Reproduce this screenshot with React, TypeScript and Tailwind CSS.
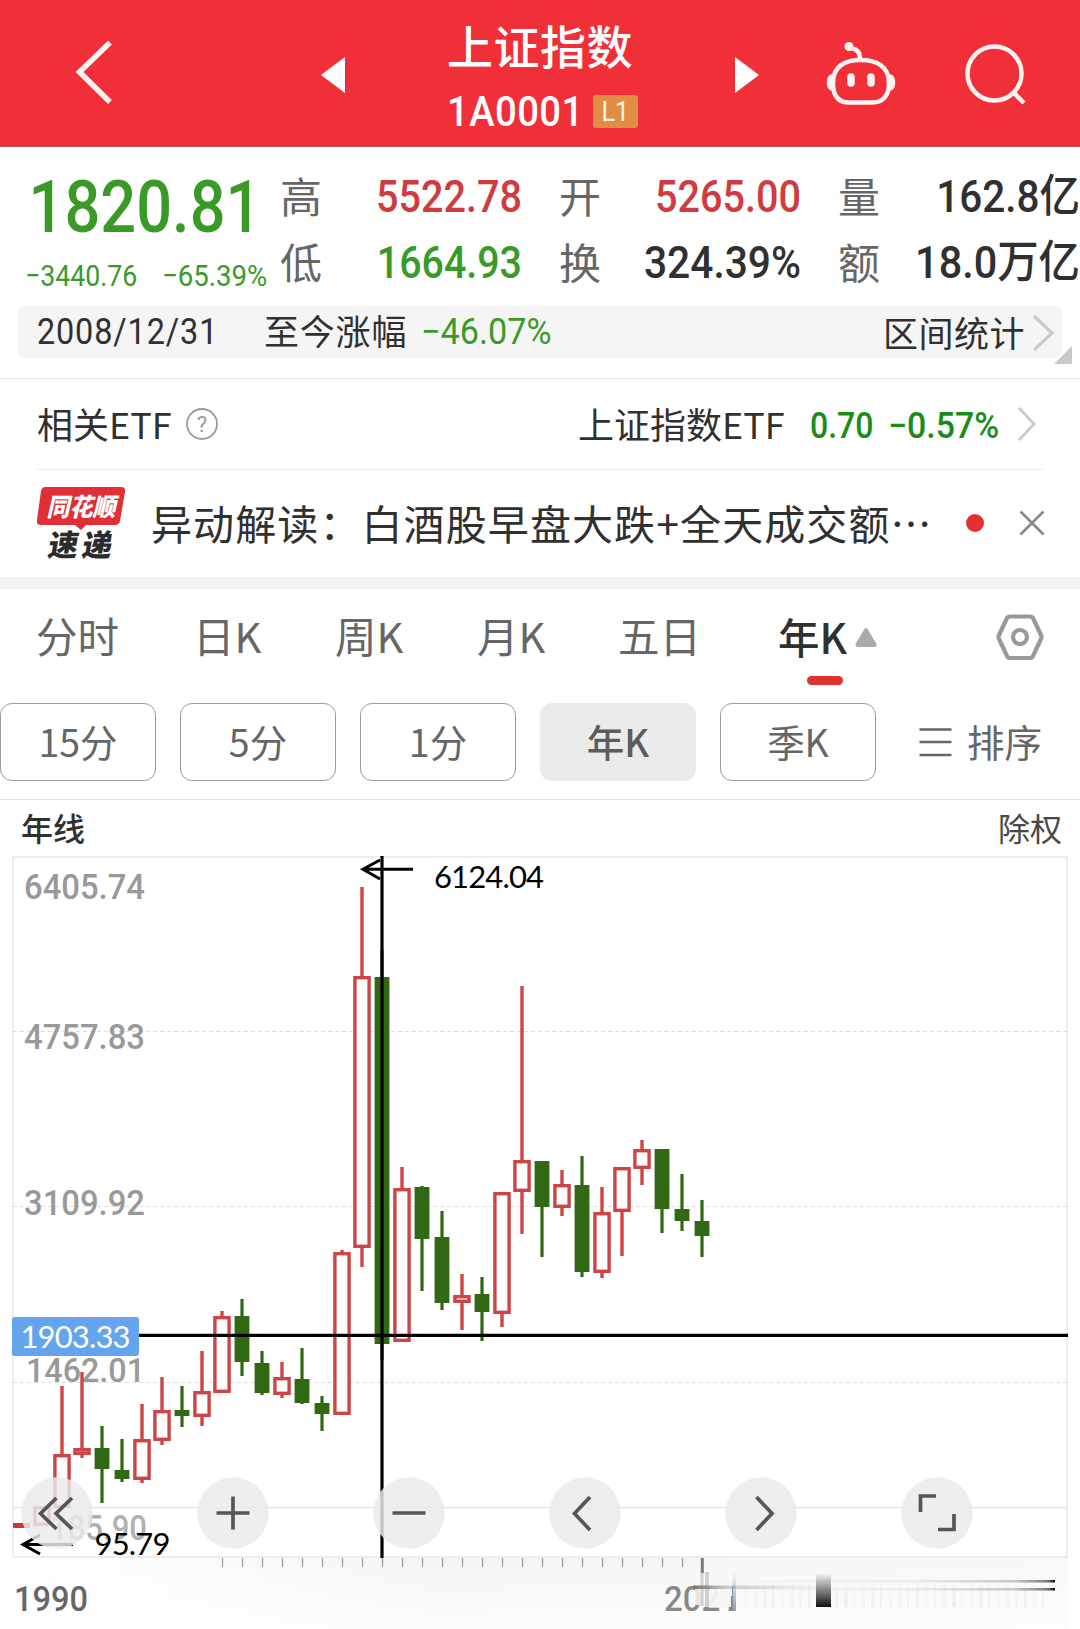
import { ReactNode } from "react";
import { clsx } from "clsx";

const NUM = "font-['Roboto','Noto_Sans_CJK_SC',sans-serif] whitespace-nowrap inline-block";

function Num({ className, children }: { className?: string; children: ReactNode }) {
    return <span className={clsx(NUM, className)}>{children}</span>;
}

function Header() {
    return (
        <header className="flex h-[147px] bg-[#f12f38] border-b border-[#c8505a] text-white">
            <div className="w-[321px] pl-[74px] pt-[38px]">
                <svg width="42" height="68" viewBox="0 0 42 68" fill="none" stroke="#fff3f1" strokeWidth="5.500">
                    <path d="M36 4.500 L5.500 34 L36 64" />
                </svg>
            </div>
            <div className="w-[126px] pt-[57px]">
                <svg width="25" height="36" viewBox="0 0 25 36" fill="#fff">
                    <path d="M24 0 L0 18 L24 36 Z" />
                </svg>
            </div>
            <div className="w-[287px] pt-[18px]">
                <div className="h-[52px] leading-[52px] text-[46px] tracking-[0.5px] font-medium">上证指数</div>
                <div className="flex h-[38px] mt-[22px]">
                    <Num className="w-[146px] leading-[40px] text-[42px] font-medium origin-left scale-x-[0.91] tracking-[0.5px]">1A0001</Num>
                    <span className="flex items-center justify-center w-[45px] h-[33px] mt-[3px] rounded-[3px] bg-[#e08d46]">
                        <Num className="text-[28px] leading-[35px] text-[#fff3dd] scale-x-[0.9]">L1</Num>
                    </span>
                </div>
            </div>
            <div className="w-[88px] pt-[57px]">
                <svg width="25" height="36" viewBox="0 0 25 36" fill="#fff">
                    <path d="M1 0 L25 18 L1 36 Z" />
                </svg>
            </div>
            <div className="w-[140px] pt-[40px] pl-[2px]">
                <svg width="74" height="68" viewBox="0 0 74 68" fill="none" stroke="#fff3f1" strokeWidth="4.500" strokeLinecap="round">
                    <path d="M36.500 20 C52 20 65 26 65 43 C65 57 58 62.500 48 62.500 H25 C15 62.500 9 57 9 43 C9 26 21 20 36.500 20 Z" />
                    <path d="M36 18 C36 12 33 9 27 8" strokeWidth="4.500" />
                    <circle cx="25" cy="6.500" r="4.500" fill="#fff3f1" stroke="none" />
                    <path d="M8 35 C2 36 2 49 8 50 Z M66 35 C72 36 72 49 66 50 Z" fill="#fff3f1" strokeWidth="1.500" />
                    <path d="M27 37 V43 M47 37 V43" strokeWidth="7.500" />
                </svg>
            </div>
            <div className="pt-[42px]">
                <svg width="66" height="66" viewBox="0 0 66 66" fill="none" stroke="#fff3f1" strokeWidth="4.500">
                    <circle cx="32.500" cy="31.500" r="27" />
                    <path d="M51 50 L62 61" />
                </svg>
            </div>
        </header>
    );
}

const labelCls = "text-[42px] leading-[64px] -ml-[1px] text-[#666]";
const valueCls = "text-[45px] leading-[68px] font-medium text-right origin-right";

function Quote() {
    return (
        <section className="border-b border-[#e4e4e4] h-[232px]">
            <div className="grid grid-cols-[281px_42px_199px_38px_42px_199px_38px_42px_199px] grid-rows-[66px_66px] pt-[16px] h-[159px]">
                <div className="row-span-2 text-[#3a9a27]">
                    <Num className="w-[250px] h-[84px] pl-[33px] text-[73px] leading-[89px] font-medium origin-left scale-x-[0.865]">1820.81</Num>
                    <div className="flex pl-[25px] h-[40px] pt-[9px]">
                        <Num className="w-[137px] text-[30px] leading-[40px] origin-left scale-x-[0.89]">−3440.76</Num>
                        <Num className="w-[115px] text-[30px] leading-[40px] origin-left scale-x-[0.92]">−65.39%</Num>
                    </div>
                </div>
                <span className={labelCls}>高</span>
                <Num className={clsx(valueCls, "text-[#cf3b40] scale-x-[0.88]")}>5522.78</Num>
                <span />
                <span className={labelCls}>开</span>
                <Num className={clsx(valueCls, "text-[#cf3b40] scale-x-[0.88]")}>5265.00</Num>
                <span />
                <span className={labelCls}>量</span>
                <Num className={clsx(valueCls, "text-[#303030] scale-x-[0.9]")}>162.8亿</Num>
                <span className={labelCls}>低</span>
                <Num className={clsx(valueCls, "text-[#3a9a27] scale-x-[0.875]")}>1664.93</Num>
                <span />
                <span className={labelCls}>换</span>
                <Num className={clsx(valueCls, "text-[#303030] scale-x-[0.905]")}>324.39%</Num>
                <span />
                <span className={labelCls}>额</span>
                <Num className={clsx(valueCls, "text-[#303030] scale-x-[0.92]")}>18.0万亿</Num>
            </div>
            <div className="relative flex w-[1044px] h-[52px] ml-[18px] rounded-[6px] bg-[#f5f5f5] text-[#303030]">
                <Num className="w-[229px] pl-[21px] text-[36px] leading-[52px] tracking-[1px] origin-left scale-x-[0.9]">2008/12/31</Num>
                <span className="w-[174px] text-[35px] leading-[48px] tracking-[0.8px] pl-[17px] whitespace-nowrap">至今涨幅</span>
                <Num className="w-[429px] text-[36px] leading-[52px] text-[#3a9a27] origin-left scale-x-[0.95]">−46.07%</Num>
                <span className="w-[168px] pl-[33px] text-[35px] leading-[52px] tracking-[0.5px] whitespace-nowrap">区间统计</span>
                <svg className="mt-[8px] ml-[14px]" width="24" height="38" viewBox="0 0 24 38" fill="none" stroke="#cbcbcb" strokeWidth="3.200">
                    <path d="M2 2 L20 19 L2 36" />
                </svg>
                <svg className="absolute -right-[10px] -bottom-[6px]" width="18" height="18" fill="#c9c9c9">
                    <path d="M18 0 V18 H0 Z" />
                </svg>
            </div>
        </section>
    );
}

function EtfRow() {
    return (
        <section className="flex items-center h-[91px] mx-[37px] border-b border-[#eaeaea] text-[#303030]">
            <span className="w-[148px] text-[36px] leading-[88px] -mt-[2px] whitespace-nowrap">相关ETF</span>
            <svg width="34" height="34" viewBox="0 0 34 34" fill="none" stroke="#9a9a9a" strokeWidth="1.800">
                <circle cx="17" cy="17" r="15" />
                <text x="17" y="25" textAnchor="middle" fontSize="22" fill="#9a9a9a" stroke="none" fontFamily="Roboto">?</text>
            </svg>
            <span className="w-[230px] ml-[359px] text-[36px] leading-[88px] -mt-[2px] whitespace-nowrap">上证指数ETF</span>
            <Num className="w-[78px] mt-[3px] ml-[2px] text-[36px] font-medium text-[#1a8c1a] origin-left scale-x-[0.89]">0.70</Num>
            <Num className="w-[127px] mt-[3px] text-[36px] font-medium text-[#1a8c1a] origin-left scale-x-[0.94]">−0.57%</Num>
            <svg width="24" height="36" viewBox="0 0 24 36" fill="none" stroke="#cbcbcb" strokeWidth="3">
                <path d="M4 2 L19 18 L4 34" />
            </svg>
        </section>
    );
}

function NewsRow() {
    return (
        <section className="flex h-[119px] border-b-[12px] border-[#f4f4f4] text-[#303030]">
            <div className="w-[114px] ml-[37px] pt-[17px]">
                <svg width="90" height="76" viewBox="0 0 90 76">
                    <path d="M8 0 H84 Q89 0 88 5 L83 34 Q82 38 78 38 H49 L44 43 L38 38 H4 Q-1 38 0 33 L4 4 Q5 0 8 0 Z" fill="#e02f36" />
                    <text x="44" y="29" textAnchor="middle" fontSize="25" fontWeight="900" fontStyle="italic" fill="#fff" textLength="69" lengthAdjust="spacingAndGlyphs" fontFamily="Noto Sans CJK SC">同花顺</text>
                    <g transform="skewX(-10)">
                        <text x="22" y="69" fontSize="30" fontWeight="900" fill="#2b2b2b" textLength="64" fontFamily="Noto Sans CJK SC">速递</text>
                    </g>
                </svg>
            </div>
            <span className="w-[815px] text-[41px] tracking-[1.1px] leading-[104px] whitespace-nowrap">异动解读：白酒股早盘大跌+全天成交额⋯</span>
            <span className="w-[18px] h-[18px] mt-[44px] rounded-full bg-[#e33131]" />
            <svg className="mt-[40px] ml-[35px]" width="26" height="26" viewBox="0 0 26 26" stroke="#888" strokeWidth="2.600">
                <path d="M1.500 1.500 L24.500 24.500 M24.500 1.500 L1.500 24.500" />
            </svg>
        </section>
    );
}

function Tabs() {
    return (
        <nav className="flex h-[114px] pl-[36px] text-[41.5px] leading-[93px] text-[#666] whitespace-nowrap">
            <span className="w-[157px]">分时</span>
            <span className="w-[142px]">日K</span>
            <span className="w-[142px]">周K</span>
            <span className="w-[141px]">月K</span>
            <span className="w-[160px]">五日</span>
            <div className="w-[218px]">
                <div className="flex items-center h-[87px] text-[#303030] font-medium">
                    <span className="leading-[93px] pt-[7px]">年K</span>
                    <svg className="ml-[8px] mt-[9px]" width="22" height="19" viewBox="0 0 22 19" fill="#aaa">
                        <path d="M9.500 1 Q11 -1 12.500 1 L21.500 16 Q22 19 19 19 H3 Q0 19 0.500 16 Z" />
                    </svg>
                </div>
                <div className="w-[36px] h-[9px] ml-[29px] rounded-full bg-[#e33131]" />
            </div>
            <svg className="mt-[24px] -ml-[1px]" width="50" height="48" viewBox="0 0 50 48" fill="none" stroke="#999" strokeWidth="4.200" strokeLinejoin="round">
                <path d="M15 3.500 H35 Q37 3.500 38 5 L46 22 Q47 24 46 26 L38 43 Q37 45 35 45 H15 Q13 45 12 43 L4 26 Q3 24 4 22 L12 5 Q13 3.500 15 3.500 Z" />
                <circle cx="25" cy="24" r="7" />
            </svg>
        </nav>
    );
}

function Periods() {
    return (
        <div className="flex gap-6 h-[97px] border-b border-[#e4e4e4] text-[37.5px] leading-[74px] text-[#666]">
            {["15分", "5分", "1分", "年K", "季K"].map((p) => (
                <button
                    key={p}
                    className={clsx(
                        "w-[156px] h-[78px] pb-[2px] shrink-0 rounded-[12px] whitespace-nowrap",
                        p === "年K" ? "bg-[#ebebeb] font-medium text-[#5c5c5c]" : "border border-[#9c9c9c]"
                    )}
                >
                    {p}
                </button>
            ))}
            <div className="flex pl-[19px] whitespace-nowrap">
                <svg className="mt-[24px] mr-[15px]" width="33" height="30" viewBox="0 0 33 30" stroke="#666" strokeWidth="2.500">
                    <path d="M0.500 2.500 H32.500 M0.500 15 H32.500 M0.500 28 H32.500" />
                </svg>
                <span className="leading-[76px]">排序</span>
            </div>
        </div>
    );
}

// [center x, high, body top, body bottom, low, up?]
const candles: [number, number, number, number, number, number][] = [
    [42, 1506, 1506, 1526, 1526, 1],
    [62, 1386, 1454, 1508, 1508, 1],
    [82, 1372, 1448, 1455, 1458, 1],
    [102, 1426, 1448, 1469, 1503, 0],
    [122, 1439, 1470, 1479, 1482, 0],
    [142, 1404, 1439, 1480, 1483, 1],
    [162, 1377, 1410, 1441, 1445, 1],
    [182, 1386, 1410, 1416, 1427, 0],
    [202, 1351, 1391, 1417, 1426, 1],
    [222, 1311, 1316, 1393, 1393, 1],
    [242, 1299, 1316, 1362, 1376, 0],
    [262, 1351, 1363, 1393, 1395, 0],
    [282, 1362, 1377, 1395, 1398, 1],
    [302, 1348, 1379, 1403, 1404, 0],
    [322, 1396, 1403, 1414, 1431, 0],
    [342, 1250, 1252, 1415, 1415, 1],
    [362, 887, 976, 1248, 1267, 1],
    [382, 950, 977, 1344, 1360, 0],
    [402, 1167, 1188, 1342, 1342, 1],
    [422, 1186, 1187, 1239, 1291, 0],
    [442, 1211, 1237, 1303, 1310, 0],
    [462, 1274, 1295, 1303, 1330, 1],
    [482, 1277, 1294, 1312, 1341, 0],
    [502, 1192, 1192, 1314, 1327, 1],
    [522, 986, 1160, 1192, 1234, 1],
    [542, 1161, 1161, 1207, 1257, 0],
    [562, 1170, 1184, 1208, 1216, 1],
    [582, 1156, 1185, 1272, 1277, 0],
    [602, 1187, 1212, 1273, 1278, 1],
    [622, 1167, 1167, 1212, 1256, 1],
    [642, 1140, 1149, 1169, 1185, 1],
    [662, 1149, 1149, 1209, 1233, 0],
    [682, 1174, 1209, 1221, 1231, 0],
    [702, 1200, 1221, 1236, 1257, 0],
];

const ticks = Array.from({ length: 24 }, (_, i) => 222.5 + i * 20);

const controls = [
    "M56.500 1498 L40.500 1513.500 L56.500 1529 M72 1498 L56 1513.500 L72 1529",
    "M216.500 1513 H249.500 M233 1496.500 V1529.500",
    "M392.500 1513 H425.500",
    "M590 1497 L574.500 1513.500 L590 1530",
    "M756.500 1497 L772 1513.500 L756.500 1530",
    "M920.500 1512 V1496 H936 M938 1529.500 H954 V1514",
];

function AxisText({ x, y, w, size, fill, children }: { x: number; y: number; w: number; size: number; fill: string; children: string }) {
    return (
        <text x={x} y={y} fontSize={size} fill={fill} textLength={w} lengthAdjust="spacingAndGlyphs" fontFamily="Roboto" fontWeight="500">
            {children}
        </text>
    );
}

function Chart() {
    return (
        <svg className="block" width="1080" height="773" viewBox="0 856 1080 773">
            <defs>
                <linearGradient id="foot" x1="0" y1="0" x2="1" y2="0">
                    <stop offset="0" stopColor="#f6f6f6" stopOpacity="0" />
                    <stop offset="0.4" stopColor="#f5f5f5" />
                    <stop offset="1" stopColor="#f8f8f8" />
                </linearGradient>
                <linearGradient id="fade" x1="0" y1="0" x2="0" y2="1">
                    <stop offset="0" stopColor="#fff" stopOpacity="0" />
                    <stop offset="1" stopColor="#fff" stopOpacity="0.7" />
                </linearGradient>
                <linearGradient id="bar" x1="0" y1="0" x2="0" y2="1">
                    <stop offset="0" stopColor="#111" stopOpacity="0" />
                    <stop offset="1" stopColor="#111" />
                </linearGradient>
                <linearGradient id="streak" x1="0" y1="0" x2="1" y2="0">
                    <stop offset="0" stopColor="#555" stopOpacity="0" />
                    <stop offset="0.6" stopColor="#555" stopOpacity="0.08" />
                    <stop offset="0.88" stopColor="#555" stopOpacity="0.3" />
                    <stop offset="0.98" stopColor="#333" stopOpacity="0.65" />
                    <stop offset="1" stopColor="#000" />
                </linearGradient>
                <linearGradient id="streakLeft" x1="0" y1="0" x2="1" y2="0">
                    <stop offset="0" stopColor="#777" />
                    <stop offset="0.25" stopColor="#777" stopOpacity="0.35" />
                    <stop offset="1" stopColor="#777" stopOpacity="0" />
                </linearGradient>
            </defs>

            <rect x="12.500" y="1557" width="1055" height="72" fill="url(#foot)" />
            <rect x="12.500" y="1557" width="1055" height="72" fill="url(#fade)" />
            <rect x="13" y="857" width="1054" height="700" fill="#fff" stroke="#e9e9e9" strokeWidth="1.600" />
            <path d="M13 1031.500 H1067 M13 1206.500 H1067 M13 1382.500 H1067" stroke="#dedede" strokeWidth="1.200" strokeDasharray="4 3" />
            <path d="M13 1507.500 H1067" stroke="#e6e6e6" strokeWidth="1.400" />

            <AxisText x={24} y={899} w={121} size={35} fill="#999">6405.74</AxisText>
            <AxisText x={24} y={1049} w={121} size={35} fill="#999">4757.83</AxisText>
            <AxisText x={24} y={1215} w={121} size={35} fill="#999">3109.92</AxisText>
            <AxisText x={26} y={1382} w={119} size={34} fill="#999">1462.01</AxisText>
            <AxisText x={50} y={1540} w={97} size={35} fill="#b0b0b0">185.90</AxisText>

            <rect x="13" y="1523" width="17" height="5" fill="#cc3636" />
            {candles.map(([x, high, top, bottom, low, up]) =>
                up ? (
                    <g key={x} stroke="#ce4546" fill="#fff" strokeWidth="3.400">
                        <path d={`M${x} ${high} V${top + 2} M${x} ${bottom - 2} V${low}`} />
                        <rect x={x - 7.1} y={top + 1.7} width="14.200" height={bottom - top - 3.4} />
                    </g>
                ) : (
                    <g key={x} fill="#316814">
                        <rect x={x - 1.6} y={high} width="3.200" height={low - high} />
                        <rect x={x - 7.4} y={top} width="14.800" height={bottom - top} />
                    </g>
                )
            )}

            <path d="M13 1335.300 H1068 M382 856 V1558" stroke="#000" strokeWidth="3.200" />
            <rect x="12" y="1317" width="127" height="39" rx="3" fill="#64a4ec" />
            <text x="20.500" y="1348" fontSize="31" fill="#fff" textLength="110" fontFamily="Lato">1903.33</text>

            <g stroke="#000" strokeWidth="3" fill="none">
                <path d="M413 869.300 H363 M380 860 L363 869.300 L380 879" />
                <path d="M73 1544.500 H23 M40 1535 L23 1544.500 L40 1554" />
            </g>
            <text x="434" y="888" fontSize="31" textLength="110" fontFamily="Lato">6124.04</text>
            <text x="94.500" y="1555" fontSize="31" textLength="76" fontFamily="Lato">95.79</text>

            {controls.map((d, i) => (
                <g key={d}>
                    <circle cx={57 + i * 176} cy="1513" r="35.700" fill="#ebebeb" fillOpacity="0.83" />
                    <path d={d} fill="none" stroke="#565656" strokeWidth="3.700" />
                </g>
            ))}

            {ticks.map((x) => (
                <path key={x} d={`M${x} 1558 V1567`} stroke="#999" strokeWidth="1.200" />
            ))}
            <path d="M702.300 1558 V1573" stroke="#7a7a7a" strokeWidth="3" />
            <AxisText x={14} y={1611} w={74} size={35} fill="#666">1990</AxisText>
            <AxisText x={664} y={1611} w={75} size={35} fill="#888">2021</AxisText>

            {/* smeared scroll handle under the axis */}
            <rect x="695" y="1584" width="12" height="21" fill="#f3f3f3" fillOpacity="0.85" />
            <rect x="703" y="1584" width="28" height="23" fill="#f6f6f6" fillOpacity="0.94" />
            <rect x="724" y="1584" width="8" height="12" fill="#f6f6f6" />
            <rect x="700.500" y="1572" width="3" height="34" fill="#888" fillOpacity="0.35" />
            <rect x="705" y="1572" width="4" height="36" fill="#999" fillOpacity="0.4" />
            <rect x="732.500" y="1572" width="3.500" height="39" fill="url(#bar)" fillOpacity="0.4" />
            <rect x="816" y="1573" width="15" height="34" fill="url(#bar)" />
            {Array.from({ length: 34 }, (_, i) => (
                <rect key={i} x={745 + i * 9} y="1577" width={(i % 3) + 2} height="30" fill="url(#bar)" fillOpacity={0.025 + (i % 4) * 0.01} />
            ))}
            <rect x="693" y="1585.500" width="130" height="3.500" fill="url(#streakLeft)" />
            <rect x="700" y="1580" width="355" height="2.500" fill="url(#streak)" />
            <rect x="700" y="1588" width="355" height="2.500" fill="url(#streak)" />
        </svg>
    );
}

export default function App() {
    return (
        <div lang="zh-CN" className="w-[1080px] h-[1629px] overflow-hidden bg-white font-['Noto_Sans_CJK_SC',sans-serif]">
            <Header />
            <Quote />
            <EtfRow />
            <NewsRow />
            <Tabs />
            <Periods />
            <div className="flex justify-between h-[56px] pl-[21px] pr-[18px] text-[32px] leading-[55px] text-[#303030]">
                <span className="font-medium">年线</span>
                <span className="text-[#484848]">除权</span>
            </div>
            <Chart />
        </div>
    );
}
